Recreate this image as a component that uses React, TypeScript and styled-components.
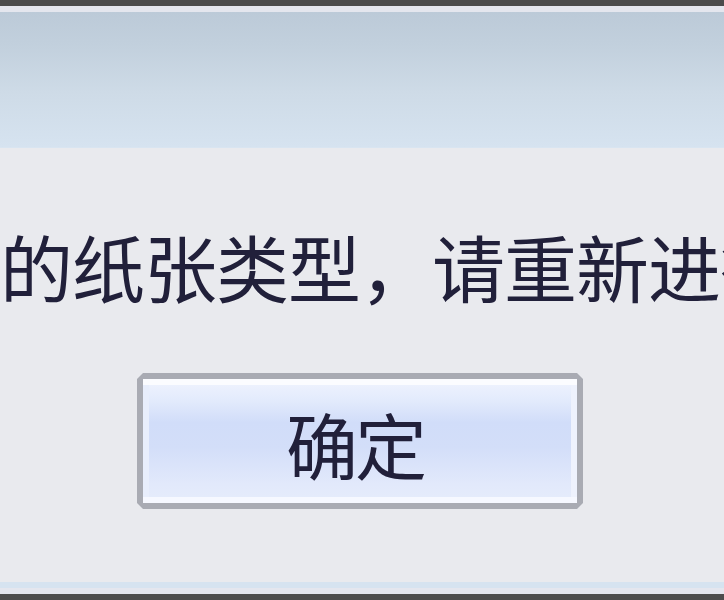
import styled, { createGlobalStyle } from 'styled-components';

const GlobalStyle = createGlobalStyle`
  html, body {
    margin: 0;
    padding: 0;
    background-color: #e9eaee;
  }
  body {
    font-family: "Noto Sans CJK SC", "Noto Sans", sans-serif;
    color: #21203a;
  }
`;

const Dialog = styled.div`
  width: 724px;
  height: 600px;
  display: flex;
  flex-direction: column;
  overflow: hidden;
  background-color: #e9eaee;
`;

const Edge = styled.div<{ $bottom?: boolean }>`
  flex: none;
  height: 6px;
  background-color: #e4e6ee;
  ${(props) =>
    props.$bottom
      ? 'border-bottom: 6px solid #4d4d4d;'
      : 'border-top: 6px solid #4b4b4b;'}
`;

const TitleBar = styled.div`
  flex: none;
  height: 135px;
  background: linear-gradient(to bottom, #bccad8 0%, #c2d0dd 25%, #cedbe7 60%, #d6e3f0 100%);
  border-bottom: 1px solid #d9e5f1;
`;

const Body = styled.div`
  flex: 1;
  display: flex;
  flex-direction: column;
  align-items: center;
  padding-top: 81px;
`;

const Message = styled.div`
  align-self: flex-start;
  margin-left: -216px;
  font-size: 73px;
  line-height: 72px;
  letter-spacing: -1px;
  white-space: nowrap;
`;

const OkButton = styled.button`
  margin-top: 72px;
  margin-left: -4px;
  width: 446px;
  height: 136px;
  padding: 3px 10px 0 0;
  border: 6px solid #a9abb3;
  clip-path: polygon(6px 0, calc(100% - 6px) 0, 100% 6px, 100% calc(100% - 6px), calc(100% - 6px) 100%, 6px 100%, 0 calc(100% - 6px), 0 6px);
  background: linear-gradient(to bottom, #f0f4fe 0%, #e2eafc 18%, #d1ddf9 35%, #d3def9 55%, #e2e9fb 85%, #e6ecfb 100%);
  box-shadow: inset 0 6px 0 #fbfcff, inset 0 -6px 0 #f6f8ff, inset 6px 0 0 #e8eefc, inset -6px 0 0 #eef2fd;
  font-family: "Noto Sans CJK SC", "Noto Sans", sans-serif;
  font-size: 72px;
  line-height: 72px;
  letter-spacing: -3px;
  color: #21203a;
  cursor: pointer;
`;

const BottomGlow = styled.div`
  flex: none;
  height: 6px;
  background-color: #d6e3f0;
`;

export default function App() {
  return (
    <>
      <GlobalStyle />
      <Dialog>
        <Edge />
        <TitleBar />
        <Body>
          <Message>不支持的纸张类型，请重新进行设置。</Message>
          <OkButton>确定</OkButton>
        </Body>
        <BottomGlow />
        <Edge $bottom />
      </Dialog>
    </>
  );
}
